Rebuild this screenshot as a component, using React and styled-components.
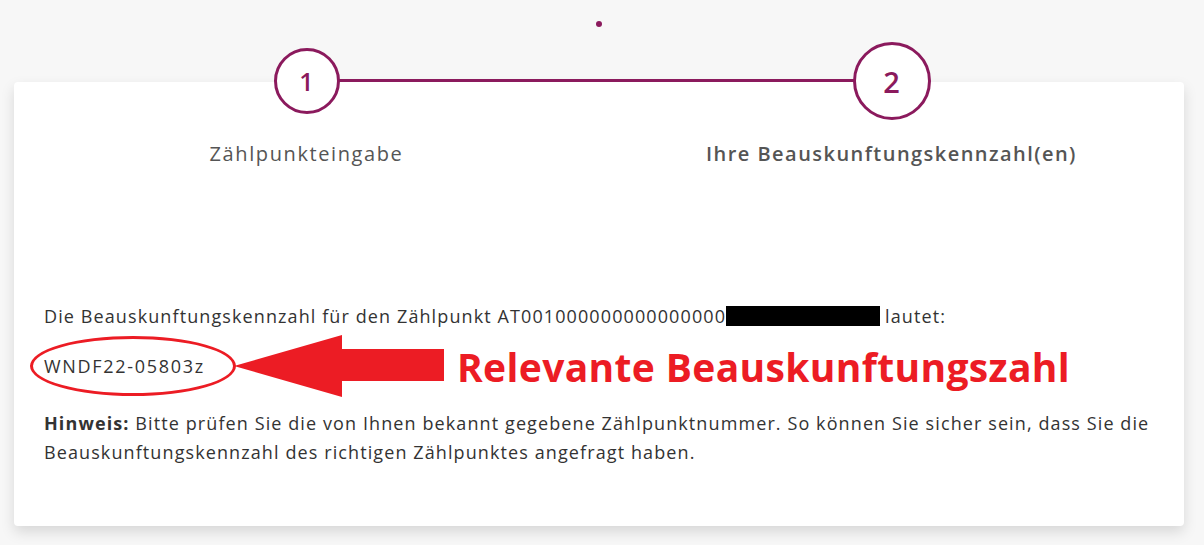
import React from 'react';
import styled, { createGlobalStyle } from 'styled-components';

const GlobalStyle = createGlobalStyle`
  html, body {
    margin: 0;
    padding: 0;
    background: #f7f7f7;
  }
  body {
    font-family: "Open Sans", "Noto Sans", Lato, sans-serif;
    color: #333;
  }
`;

const BRAND = '#8b1a5d';
const RED = '#ec1c24';

const Page = styled.div`
  width: 1204px;
  height: 545px;
  box-sizing: border-box;
  padding: 21px 20px 0 14px;
  overflow: hidden;
`;

const DotRow = styled.div`
  display: flex;
  justify-content: center;
  height: 61px;
`;

const Dot = styled.span`
  width: 6px;
  height: 6px;
  border-radius: 50%;
  background: ${BRAND};
`;

const Card = styled.div`
  display: flow-root;
  background: #fff;
  border-radius: 4px;
  box-shadow: 0 6px 14px rgba(0, 0, 0, 0.13);
  height: 444px;
  box-sizing: border-box;
  padding: 0 30px;
`;

const Stepper = styled.div`
  position: relative;
  display: grid;
  grid-template-columns: 1fr 1fr;
  margin: -40px -30px 0;
  align-items: center;
  height: 78px;
`;

const Connector = styled.div`
  position: absolute;
  left: 25%;
  right: 25%;
  top: 50%;
  height: 3px;
  margin-top: -2px;
  background: ${BRAND};
`;

const Step = styled.div`
  display: flex;
  justify-content: center;
  position: relative;
  z-index: 1;
`;

const Circle = styled.div`
  width: ${({ size }) => size}px;
  height: ${({ size }) => size}px;
  box-sizing: border-box;
  border: 3px solid ${BRAND};
  border-radius: 50%;
  background: #fff;
  display: flex;
  align-items: center;
  justify-content: center;
  color: ${BRAND};
  font-size: ${({ active }) => (active ? 29 : 25)}px;
  font-weight: 600;
`;

const Labels = styled.div`
  display: grid;
  grid-template-columns: 1fr 1fr;
  margin: 20px -30px 0;
`;

const Label = styled.div`
  text-align: center;
  font-size: 20px;
  line-height: 28px;
  letter-spacing: ${({ active }) => (active ? 1.45 : 1.6)}px;
  color: #555;
  font-weight: ${({ active }) => (active ? 600 : 400)};
`;

const Body = styled.div`
  margin-top: 136px;
  font-size: 18px;
  letter-spacing: 1.1px;
  color: #333;
`;

const Line = styled.p`
  margin: 0;
  line-height: 24px;
`;

const Redacted = styled.span`
  display: inline-block;
  width: 154px;
  height: 20px;
  background: #000;
  vertical-align: -3px;
  margin-right: 5px;
`;

const CodeRow = styled.div`
  display: flex;
  align-items: center;
  margin: 6px 0 0 -14px;
  height: 64px;
  letter-spacing: normal;
`;

const Ellipse = styled.div`
  width: 206px;
  height: 60px;
  box-sizing: border-box;
  border: 3px solid ${RED};
  border-radius: 50%;
  display: flex;
  align-items: center;
  padding-left: 11px;
  font-size: 18px;
  letter-spacing: 1.7px;
  color: #333;
`;

const Arrow = styled.svg`
  display: block;
  margin-left: -4px;
  flex-shrink: 0;
`;

const Callout = styled.span`
  margin-left: 13px;
  color: ${RED};
  font-size: 39px;
  font-weight: 700;
  letter-spacing: 0.35px;
  white-space: nowrap;
`;

const Hint = styled.p`
  margin: 11px 0 0;
  line-height: 29px;
  font-size: 18px;
  color: #333;
`;

const Strong = styled.strong`
  font-weight: 700;
`;

export default function App() {
  return (
    <Page>
      <GlobalStyle />
      <DotRow>
        <Dot />
      </DotRow>
      <Card>
        <Stepper>
          <Connector />
          <Step>
            <Circle size={66}>1</Circle>
          </Step>
          <Step>
            <Circle size={78} active>2</Circle>
          </Step>
        </Stepper>
        <Labels>
          <Label>Zählpunkteingabe</Label>
          <Label active>Ihre Beauskunftungskennzahl(en)</Label>
        </Labels>
        <Body>
          <Line>
            Die Beauskunftungskennzahl für den Zählpunkt AT001000000000000000<Redacted />lautet:
          </Line>
          <CodeRow>
            <Ellipse>WNDF22-05803z</Ellipse>
            <Arrow width="212" height="64" viewBox="0 0 212 64">
              <path d="M2 32 L110 1 L110 15 L212 15 L212 47 L110 47 L110 63 Z" fill={RED} strokeLinejoin="round" />
            </Arrow>
            <Callout>Relevante Beauskunftungszahl</Callout>
          </CodeRow>
          <Hint>
            <Strong>Hinweis:</Strong> Bitte prüfen Sie die von Ihnen bekannt gegebene Zählpunktnummer. So können Sie sicher sein, dass Sie die Beauskunftungskennzahl des richtigen Zählpunktes angefragt haben.
          </Hint>
        </Body>
      </Card>
    </Page>
  );
}
